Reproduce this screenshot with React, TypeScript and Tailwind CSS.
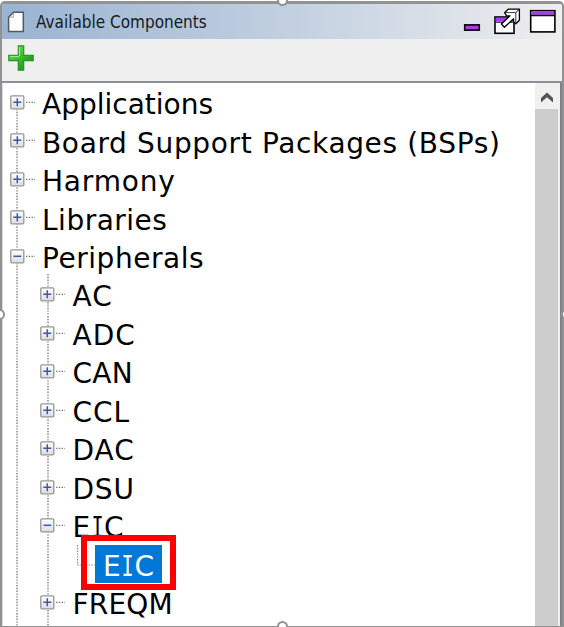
import { clsx } from "clsx";

type Item = {
  label: string;
  level: 0 | 1;
  open?: boolean;
  track?: string;
};

const items: Item[] = [
  { label: "Applications", level: 0 },
  { label: "Board Support Packages (BSPs)", level: 0, track: "tracking-[0.65px]" },
  { label: "Harmony", level: 0, track: "tracking-[0.8px]" },
  { label: "Libraries", level: 0, track: "tracking-[0.5px]" },
  { label: "Peripherals", level: 0, open: true, track: "tracking-[0.55px]" },
  { label: "AC", level: 1, track: "tracking-[1px]" },
  { label: "ADC", level: 1, track: "tracking-[1px]" },
  { label: "CAN", level: 1, track: "tracking-[0.3px]" },
  { label: "CCL", level: 1, track: "tracking-[1px]" },
  { label: "DAC", level: 1, track: "tracking-[1px]" },
  { label: "DSU", level: 1, track: "tracking-[0.8px]" },
  { label: "EIC", level: 1, open: true, track: "tracking-[1px]" },
];

const last: Item = { label: "FREQM", level: 1, track: "tracking-[0.2px]" };

// Capital I carries serifs, as in the tree's typeface.
function Label({ text }: { text: string }) {
  if (text !== "EIC") return <>{text}</>;
  return (
    <>
      E
      <span className="-mx-[2.5px] inline-block origin-center scale-x-[0.72] font-['DejaVu_Sans_Mono',monospace]">
        I
      </span>
      C
    </>
  );
}

function Toggle({ open }: { open?: boolean }) {
  return (
    <svg width="26" height="15" viewBox="0 0 26 15" className="relative -top-[0.7px] left-[0.5px] shrink-0">
      <defs>
        <linearGradient id="knob" x1="0" y1="0" x2="0" y2="1">
          <stop offset="0" stopColor="#ffffff" />
          <stop offset="1" stopColor="#dedede" />
        </linearGradient>
      </defs>
      <rect x="0.2" y="0.2" width="14.4" height="14.4" fill="#fff" />
      <rect x="0.8" y="0.8" width="13" height="13" rx="1" fill="url(#knob)" stroke="#969696" strokeWidth="1.3" />
      <path d={open ? "M3.5 7.3H11.3" : "M3.3 7.3H11.3M7.3 3.3V11.3"} stroke="#3d58a6" strokeWidth="1.5" />
      <path d="M16 7.3H25" stroke="#777" strokeWidth="1.2" strokeDasharray="1.4 1.4" />
    </svg>
  );
}

function Row({ item }: { item: Item }) {
  return (
    <div className={clsx("flex h-[38.46px] shrink-0 items-center", item.level === 0 ? "pl-[6px]" : "pl-[36.5px]")}>
      <Toggle open={item.open} />
      <span className={clsx("relative top-[2px] ml-[7px] whitespace-nowrap text-[28px] leading-[38px] text-black", item.track)}>
        <Label text={item.label} />
      </span>
    </div>
  );
}

function Dots({ className }: { className: string }) {
  return (
    <svg className={clsx("absolute w-[2px]", className)}>
      <path d="M1 0V600" stroke="#777" strokeWidth="1.3" strokeDasharray="1.4 1.4" />
    </svg>
  );
}

function Handle({ className }: { className: string }) {
  return <span className={clsx("absolute size-[11px] rounded-full border-2 border-[#929292] bg-white", className)} />;
}

function WindowIcons() {
  return (
    <div className="ml-auto flex h-full items-start">
      <svg width="100" height="35" viewBox="462 4 100 35">
        <rect x="464.7" y="24.9" width="14.6" height="5.2" fill="#a83bf0" stroke="#000" strokeWidth="1.6" />
        <rect x="495" y="17" width="19" height="16.3" fill="#fff" stroke="#000" strokeWidth="1.6" />
        <path d="M495.8 17.8H513.2V21.6H495.8Z" fill="#a83bf0" />
        <path d="M495.8 22.2H513" stroke="#000" strokeWidth="1" />
        <path
          d="M504.6 12.6L508.2 9.2H519.4V20.2L515.8 23.8L513.6 21.8V18.8L504.4 27.2L501.4 24L510 15.8H506.6Z"
          fill="#fff"
          stroke="#000"
          strokeWidth="1.3"
          strokeLinejoin="round"
        />
        <path d="M505.5 12.6H515.8V22.5" fill="none" stroke="#000" strokeWidth="0.8" />
        <path d="M515.8 12.6L519 9.6" stroke="#000" strokeWidth="0.9" />
        <rect x="530.7" y="10.7" width="24.2" height="21.2" fill="#fff" stroke="#000" strokeWidth="1.6" />
        <rect x="531.5" y="11.5" width="22.6" height="3.3" fill="#a83bf0" />
        <path d="M530.5 15.6H555" stroke="#000" strokeWidth="1.5" />
      </svg>
    </div>
  );
}

export default function App() {
  return (
    <div className="relative flex h-[627px] w-[564px] flex-col overflow-hidden bg-white font-['DejaVu_Sans',sans-serif]">
      <div className="mt-px flex min-h-0 flex-1 flex-col overflow-hidden rounded-t-[5px] border-x-2 border-b border-t-[3px] border-[#929292] bg-[#efefef]">
        <header className="flex h-[35px] shrink-0 items-start bg-linear-to-r from-[#9ab3d1] via-[#c1cfe0] to-[#eeeeef]">
          <svg width="24" height="30" viewBox="2 4 24 30" className="shrink-0">
            <path d="M13.5 12.3H23.3V31.5H8.6V17.2Z" fill="#fff" stroke="#515963" strokeWidth="1.5" />
            <path d="M9.4 17.2H13.5V13" fill="none" stroke="#a9adb2" strokeWidth="1" />
          </svg>
          <span className="ml-[10px] mt-[6px] whitespace-nowrap font-['DejaVu_Sans_Condensed','DejaVu_Sans',sans-serif] text-[17px] leading-[24px] text-[#141a23] [font-stretch:condensed]">
            Available Components
          </span>
          <WindowIcons />
        </header>

        <div className="flex h-[42px] shrink-0 items-start pl-[5px] pt-[5px]">
          <svg width="28" height="28" viewBox="0 0 28 28">
            <defs>
              <linearGradient id="green" x1="0" y1="0" x2="1" y2="1">
                <stop offset="0" stopColor="#72de61" />
                <stop offset="0.5" stopColor="#39bd2c" />
                <stop offset="1" stopColor="#087f0c" />
              </linearGradient>
            </defs>
            <path
              d="M11.3 1.8H16.7V11.3H26.2V16.7H16.7V26.2H11.3V16.7H1.8V11.3H11.3Z"
              fill="url(#green)"
              stroke="#29932a"
              strokeWidth="1.2"
            />
            <path d="M12.4 11.8V3.2M3 12.4H12" stroke="#a4ed98" strokeWidth="1" />
          </svg>
        </div>

        <div className="flex min-h-0 flex-1 border-t-2 border-[#8a9099] bg-white">
          <main className="relative flex min-w-0 flex-1 flex-col overflow-hidden border-l border-[#d8dbe0] pt-px">
            <Dots className="left-[13px] top-[26px] h-[540px]" />
            <Dots className="left-[43.5px] top-[191px] h-[352px]" />
            {items.map((item) => (
              <Row key={item.label} item={item} />
            ))}
            <div className="flex h-[38.46px] shrink-0 items-center pl-[73px]">
              <svg width="19" height="39" viewBox="0 0 19 39" className="shrink-0">
                <path d="M1.5 0V20M1.5 20H19" fill="none" stroke="#888" strokeWidth="1.2" strokeDasharray="1.4 1.4" />
              </svg>
              <span className="relative -top-px flex h-[38px] w-[67px] items-center bg-[#0078d7] pl-[8px] text-[28px] text-white">
                <span className="relative top-[3px] whitespace-nowrap tracking-[1px]">
                  <Label text="EIC" />
                </span>
              </span>
            </div>
            <Row item={last} />
          </main>
          <aside className="flex w-[27px] shrink-0 flex-col border-r-2 border-[#7c838d] bg-[#f0f0f0]">
            <div className="flex h-[26px] w-[23px] items-center justify-center">
              <svg width="14" height="12" viewBox="0 0 14 12" className="mt-[3px]">
                <path d="M1 10.5V6L7 0.5L13 6V10.5L7 5.2Z" fill="#555" />
              </svg>
            </div>
            <div className="w-[23px] flex-1 bg-[#cdcdcd]" />
          </aside>
        </div>
      </div>
      <div className="absolute left-[81px] top-[535px] h-[55px] w-[95px] border-6 border-[#fe0000]" />
      <Handle className="-top-[5px] left-[277px]" />
      <Handle className="left-[277px] top-[621px]" />
      <Handle className="-left-[6px] top-[309px]" />
      <Handle className="left-[561px] top-[309px]" />
    </div>
  );
}
